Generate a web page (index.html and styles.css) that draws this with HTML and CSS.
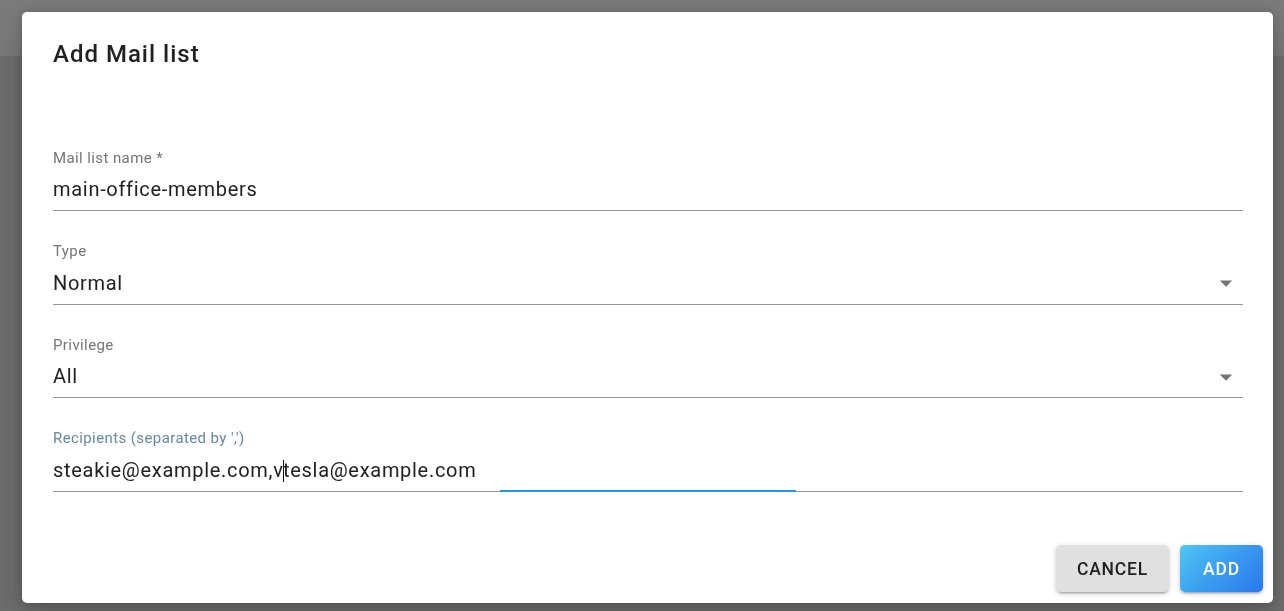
FILE: index.html
```html
<!DOCTYPE html>
<html lang="en">
<head>
<meta charset="utf-8">
<title>Add Mail list</title>
<link rel="stylesheet" href="styles.css">
</head>
<body>
<header class="appbar"></header>
<div class="backdrop">
  <div class="dialog" role="dialog">
    <h2 class="dialog-title">Add Mail list</h2>
    <div class="dialog-content">
      <div class="field">
        <label class="field-label">Mail list name *</label>
        <div class="field-input">main-office-members</div>
      </div>
      <div class="field">
        <label class="field-label">Type</label>
        <div class="field-input field-select">Normal
          <svg class="select-icon" viewBox="0 0 24 24" width="30" height="30"><path d="M7 10l5 5 5-5z"/></svg>
        </div>
      </div>
      <div class="field">
        <label class="field-label">Privilege</label>
        <div class="field-input field-select">All
          <svg class="select-icon" viewBox="0 0 24 24" width="30" height="30"><path d="M7 10l5 5 5-5z"/></svg>
        </div>
      </div>
      <div class="field field-focused">
        <label class="field-label">Recipients (separated by ',')</label>
        <div class="field-input">steakie@example.com,v<span class="caret"></span>tesla@example.com</div>
      </div>
    </div>
    <div class="dialog-actions">
      <button class="btn btn-cancel">Cancel</button>
      <button class="btn btn-add">Add</button>
    </div>
  </div>
</div>
</body>
</html>
```

FILE: styles.css
```css
* { box-sizing: border-box; }

html, body {
  margin: 0;
  height: 100%;
}

body {
  background: #6d6d6d;
  font-family: Roboto, "Liberation Sans", sans-serif;
  overflow: hidden;
}

.appbar {
  height: 56px;
  background: #7a7a7a;
}

.backdrop {
  position: fixed;
  inset: 0;
  display: flex;
  padding: 12px 11px 8px 22px;
}

.dialog {
  flex: 1;
  background: #fff;
  border-radius: 5px;
  display: flex;
  flex-direction: column;
  box-shadow: 0 14px 28px rgba(0,0,0,0.18), 0 0 12px rgba(0,0,0,0.16);
}

.dialog-title {
  margin: 0;
  padding: 26px 31px 0;
  font-size: 24px;
  line-height: 32px;
  font-weight: 500;
  color: #212121;
  letter-spacing: 1px;
}

.dialog-content {
  padding: 78.5px 30px 0 31px;
  display: flex;
  flex-direction: column;
  gap: 31.17px;
}

.field {
  position: relative;
  display: flex;
  flex-direction: column;
}

.field-label {
  font-size: 15px;
  line-height: 18px;
  color: #757575;
  letter-spacing: 0.4px;
}

.field-input {
  position: relative;
  margin-top: 10.5px;
  font-size: 20px;
  line-height: 24px;
  color: #212121;
  letter-spacing: 0.7px;
  padding-bottom: 9px;
  border-bottom: 1px solid #949494;
  white-space: nowrap;
}

.select-icon {
  position: absolute;
  right: 2px;
  top: -2.5px;
  fill: #757575;
}

.field-focused .field-label {
  color: #6487a8;
}

.field-focused .field-input::after {
  content: "";
  position: absolute;
  left: 447px;
  width: 296px;
  bottom: -1px;
  height: 2px;
  background: #2196f3;
}

.caret {
  display: inline-block;
  width: 0;
  height: 22px;
  border-left: 1.6px solid #111;
  margin-left: -0.7px;
  margin-right: -0.9px;
  vertical-align: -5px;
}

.dialog-actions {
  margin-top: auto;
  display: flex;
  justify-content: flex-end;
  gap: 11px;
  padding: 0 10px 11px 0;
}

.btn {
  height: 47px;
  min-width: 83px;
  padding: 0 20px;
  border: none;
  border-radius: 5px;
  font-family: Roboto, "Liberation Sans", sans-serif;
  font-size: 17.5px;
  font-weight: 500;
  letter-spacing: 0.8px;
  text-transform: uppercase;
  display: flex;
  align-items: center;
  justify-content: center;
  box-shadow: 0 4px 2px -3px rgba(0,0,0,0.2), 0 2px 3px 0 rgba(0,0,0,0.14), 0 1px 7px 0 rgba(0,0,0,0.12);
}

.btn-cancel {
  background: #e0e0e0;
  color: #212121;
  width: 113px;
}

.btn-add {
  background: linear-gradient(135deg, #52c6f4 0%, #3a9cf0 50%, #2a78ec 100%);
  color: #fff;
}
```
